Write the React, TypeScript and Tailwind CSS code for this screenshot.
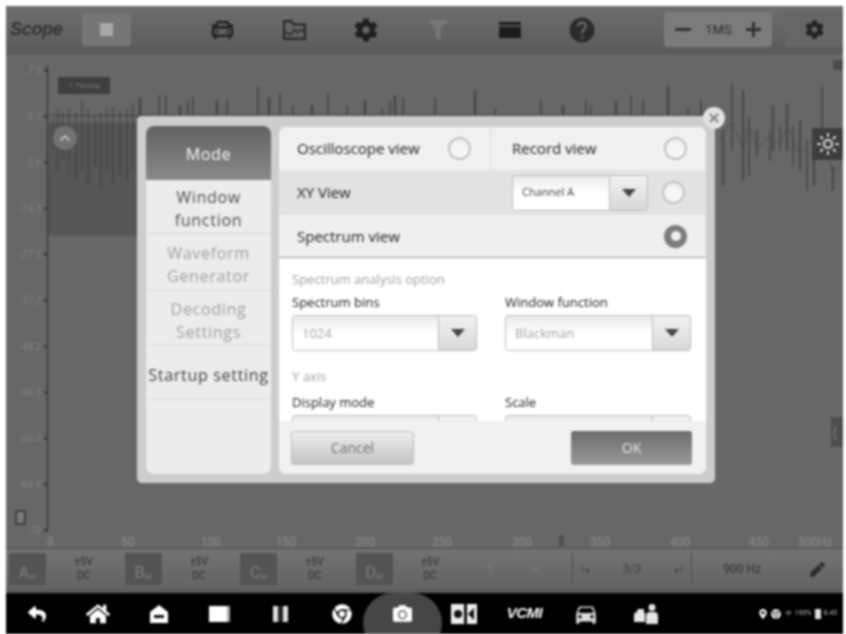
import { CarFront, Sun, X, ChevronUp } from "lucide-react";
import { FaChrome, FaCamera, FaCog, FaFilter, FaHome, FaPen, FaReply, FaMapMarkerAlt, FaWifi } from "react-icons/fa";
import { MdDirectionsCar, MdHelp } from "react-icons/md";

// spikes above the dialog: [x, top of spike]
const topSpikes = [
  [140, 97], [159, 95], [166, 95], [180, 105], [188, 100], [193, 97], [217, 100], [227, 100], [258, 86], [269, 97],
  [280, 93], [293, 105], [312, 105], [328, 92], [347, 105], [365, 100], [382, 108], [390, 100], [395, 95], [403, 97],
  [435, 97], [475, 90], [495, 108], [541, 100], [563, 105], [586, 100], [591, 105], [616, 100], [631, 95], [643, 100],
  [668, 85], [688, 107], [701, 100],
];
// strokes right of the dialog: [x, top, bottom]
const rightSpikes = [
  [723, 130, 185], [732, 83, 150], [743, 90, 180], [749, 115, 175], [757, 130, 155], [770, 130, 160], [773, 105, 150],
  [780, 125, 150], [787, 103, 150], [793, 125, 165], [800, 120, 170], [807, 140, 190], [814, 150, 185], [822, 85, 160], [833, 165, 190],
];
// denser strokes left of the dialog
const leftSpikes = [
  [53, 118, 150], [58, 108, 170], [63, 112, 160], [69, 108, 175], [76, 112, 180], [82, 100, 170], [88, 108, 185], [95, 116, 165],
  [101, 112, 190], [107, 108, 170], [113, 106, 185], [120, 110, 175], [127, 108, 180], [133, 103, 170],
];
const yLabels = ["7.5", "8.7", "2.6", "-14.3", "-27.5", "-37.2", "-44.2", "-56.5", "-60.0", "-64.4", "-70"];
const xLabels: [number, string][] = [
  [50, "0"], [128, "50"], [211, "100"], [286, "150"], [365, "200"], [442, "250"], [522, "300"], [600, "350"], [680, "400"], [759, "450"], [815, "500Hz"],
];

function Chart() {
  return (
    <svg className="absolute inset-0 w-full h-full" viewBox="6 54 837 493">
      <rect x="48" y="122" width="92" height="113" fill="#565656" />
      <line x1="47.5" y1="65" x2="47.5" y2="530" stroke="#3c3c3c" strokeWidth="1.5" />
      <line x1="50" y1="115" x2="720" y2="115" stroke="#4f4f4f" strokeWidth="1.5" />
      {yLabels.map((t, i) => (
        <g key={i}>
          <line x1="44" x2="48" y1={70 + i * 46} y2={70 + i * 46} stroke="#333" strokeWidth="2" />
          <text x="41" y={73 + i * 46} textAnchor="end" fontSize="10" fontStyle="italic" fill="#808080" fontFamily="Roboto, sans-serif">{t}</text>
        </g>
      ))}
      <g className="blur-[0.6px]">
        {leftSpikes.map(([x, a, b], i) => (
          <line key={i} x1={x} x2={x} y1={a} y2={b} stroke="#444" strokeWidth="2.4" opacity="0.55" />
        ))}
        {topSpikes.map(([x, t], i) => (
          <line key={i} x1={x} x2={x} y1={t} y2="116" stroke="#454545" strokeWidth={i % 3 === 0 ? 2.4 : 1.6} />
        ))}
        {rightSpikes.map(([x, a, b], i) => (
          <line key={i} x1={x} x2={x} y1={a} y2={b} stroke="#484848" strokeWidth={i % 2 === 0 ? 2.2 : 1.6} />
        ))}
        <polyline points="718,140 732,120 743,150 749,125 757,148 770,135 780,145 787,125 800,155 807,145 822,130 833,175 843,160" fill="none" stroke="#505050" strokeWidth="1" />
      </g>
      {xLabels.map(([x, t]) => (
        <text key={t} x={x} y="545" textAnchor="middle" fontSize="12" fill="#8c8c8c" fontFamily="Roboto, sans-serif">{t}</text>
      ))}
      <rect x="559" y="535" width="5" height="11" fill="#444" opacity="0.7" />
    </svg>
  );
}

function Radio({ on }: { on?: boolean }) {
  if (on) {
    return (
      <span className="w-[23px] h-[23px] rounded-full bg-[#7d7d7d] flex items-center justify-center">
        <span className="w-[10px] h-[10px] rounded-full bg-[#eee]" />
      </span>
    );
  }
  return <span className="w-[23px] h-[23px] rounded-full border-2 border-[#c4c4c4] bg-[#f6f6f6] shadow-inner" />;
}

function Select({ value, small }: { value: string; small?: boolean }) {
  return (
    <div className="flex h-[36px] rounded-[3px] border border-[#bcbcbc] overflow-hidden">
      <div className={`flex-1 flex items-center pl-[9px] bg-gradient-to-b from-[#e9e9e9] via-white to-white ${small ? "text-[11px] text-[#444]" : "text-[13px] text-[#a8a8a8]"}`}>
        {value}
      </div>
      <div className="w-[38px] flex items-center justify-center border-l border-[#bcbcbc] bg-gradient-to-b from-[#f2f2f2] to-[#d8d8d8]">
        <span className="w-0 h-0 border-x-[7px] border-x-transparent border-t-[8px] border-t-[#444]" />
      </div>
    </div>
  );
}

function Dialog() {
  return (
    <div className="absolute left-[131px] top-[62px] w-[578px] h-[367px] rounded-[5px] bg-[#cdcdcd] flex gap-[8px] p-[9px] font-['Open_Sans',sans-serif]">
      <button className="absolute -right-[10px] -top-[9px] w-[22px] h-[22px] rounded-full bg-[#e2e2e2] flex items-center justify-center">
        <X className="w-[14px] h-[14px] text-[#8a8a8a]" strokeWidth={4} />
      </button>
      <div className="w-[125px] mt-[1px] rounded-lg bg-[#ececec] overflow-hidden flex flex-col text-center text-[16px] leading-[23px] tracking-[0.7px]">
        <div className="h-[54px] shrink-0 pt-[2px] flex items-center justify-center bg-gradient-to-b from-[#626262] to-[#8a8a8a] text-[#f2f2f2]">Mode</div>
        <div className="h-[54px] shrink-0 pt-[5px] flex items-center justify-center border-b border-[#d6d6d6] text-[#555]">Window<br />function</div>
        <div className="h-[57px] shrink-0 pt-[5px] flex items-center justify-center border-b border-[#dcdcdc] text-[#a6a6a6]">Waveform<br />Generator</div>
        <div className="h-[54px] shrink-0 pt-[6px] flex items-center justify-center border-b border-[#dcdcdc] text-[#a6a6a6]">Decoding<br />Settings</div>
        <div className="h-[55px] shrink-0 pt-[7px] flex items-center justify-center border-b border-[#dcdcdc] text-[#4a4a4a] whitespace-nowrap">Startup setting</div>
      </div>
      <div className="flex-1 mt-[2px] rounded-lg overflow-hidden flex flex-col bg-white">
        <div className="h-[43px] shrink-0 flex bg-[#f0f0f0] text-[15px] text-[#2a2a2a]">
          <div className="w-[212px] flex items-center justify-between pl-[18px] pr-[19px] border-r border-[#dedede]">
            <span>Oscilloscope view</span>
            <Radio />
          </div>
          <div className="flex-1 flex items-center justify-between pl-[21px] pr-[19px]">
            <span>Record view</span>
            <Radio />
          </div>
        </div>
        <div className="h-[45px] shrink-0 flex items-center bg-[#e2e2e2] pl-[18px] pr-[21px] text-[15px] text-[#2a2a2a]">
          <span className="flex-1">XY View</span>
          <div className="w-[136px] mr-[14px]"><Select value="Channel A" small /></div>
          <Radio />
        </div>
        <div className="h-[43px] shrink-0 flex items-center justify-between bg-[#efefef] border-b border-[#9e9e9e] pl-[18px] pr-[19px] text-[15px] text-[#2a2a2a]">
          <span>Spectrum view</span>
          <Radio on />
        </div>
        <div className="h-[163px] shrink-0 overflow-hidden px-[13px] pt-[13px] bg-white text-[13px] leading-[16px]">
          <div className="text-[#a6a6a6]">Spectrum analysis option</div>
          <div className="grid grid-cols-[185px_186px] gap-x-[28px] mt-[7px]">
            <div>
              <div className="text-[#2a2a2a] mb-[5px]">Spectrum bins</div>
              <Select value="1024" />
            </div>
            <div>
              <div className="text-[#2a2a2a] mb-[5px]">Window function</div>
              <Select value="Blackman" />
            </div>
          </div>
          <div className="text-[#a6a6a6] mt-[17px]">Y axis</div>
          <div className="grid grid-cols-[185px_186px] gap-x-[28px] mt-[10px]">
            <div>
              <div className="text-[#2a2a2a] mb-[5px]">Display mode</div>
              <Select value="" />
            </div>
            <div>
              <div className="text-[#2a2a2a] mb-[5px]">Scale</div>
              <Select value="" />
            </div>
          </div>
        </div>
        <div className="flex-1 flex items-center justify-between bg-[#f1f1f1] pl-[12px] pr-[14px] text-[14px]">
          <button className="w-[123px] h-[34px] rounded-[3px] border border-[#bdbdbd] bg-gradient-to-b from-[#ededed] to-[#c4c4c4] text-[#777]">Cancel</button>
          <button className="w-[121px] h-[34px] rounded-[3px] bg-gradient-to-b from-[#6d6d6d] to-[#9a9a9a] text-[#e2e2e2]">OK</button>
        </div>
      </div>
    </div>
  );
}

function TopBar() {
  const cell = "w-[72px] flex items-center justify-center";
  return (
    <div className="h-[48px] shrink-0 flex items-center bg-gradient-to-b from-[#6e6e6e] to-[#5b5b5b] border-b border-[#565656]">
      <div className="w-[76px] pl-[4px] font-['Liberation_Sans',sans-serif] italic font-bold text-[18px] tracking-[-0.3px] text-[#353535]">Scope</div>
      <div className="w-[49px] h-[33px] rounded-[4px] bg-[#767676] flex items-center justify-center">
        <span className="w-[13px] h-[13px] bg-[#a8a8a8]" />
      </div>
      <div className="ml-[55px] flex h-full">
        <div className={cell}><CarFront className="w-[25px] h-[25px] text-[#222]" strokeWidth={2.6} /></div>
        <div className={cell}>
          <svg viewBox="0 0 24 24" className="w-[25px] h-[25px]" fill="none" stroke="#2a2a2a" strokeWidth="2.2">
            <path d="M2 21V4h7l2 3h11v14z" />
            <path d="M3 14l5 3 4-5 3 3 3-3 3 2" strokeWidth="1.5" />
          </svg>
        </div>
        <div className={cell}><FaCog className="w-[24px] h-[24px] text-[#1f1f1f]" /></div>
        <div className={cell}><FaFilter className="w-[20px] h-[20px] text-[#777]" /></div>
        <div className={cell}>
          <svg viewBox="0 0 22 16" className="w-[22px] h-[16px]" fill="#1c1c1c">
            <path d="M0 0h22v3H0zM0 4.5h22V16H0z" />
          </svg>
        </div>
        <div className={cell}><MdHelp className="w-[30px] h-[30px] text-[#2b2b2b]" /></div>
      </div>
      <div className="ml-[46px] w-[108px] h-[35px] rounded-[4px] bg-[#7b7b7b] flex items-center justify-between px-[11px] text-[13px] text-[#2f2f2f] font-['Roboto',sans-serif]">
        <span className="w-[16px] h-[3px] bg-[#333]" />
        <span>1MS</span>
        <span className="relative w-[15px] h-[15px]">
          <span className="absolute left-0 top-[6px] w-[15px] h-[3px] bg-[#333]" />
          <span className="absolute left-[6px] top-0 w-[3px] h-[15px] bg-[#333]" />
        </span>
      </div>
      <div className="ml-[13px] w-[58px] h-[35px] rounded-[4px] bg-[#666] flex items-center justify-center">
        <FaCog className="w-[19px] h-[19px] text-[#222]" />
      </div>
    </div>
  );
}

function Channel({ name, sub }: { name: string; sub: string }) {
  return (
    <div className="w-[115.5px] flex items-center">
      <div className="ml-[3px] w-[37px] h-[32px] rounded-[2px] bg-[#545454] flex items-end justify-center pb-[4px] text-[16px] leading-none text-[#7d7d7d]">
        {name}<span className="text-[8px]">{sub}</span>
      </div>
      <div className="w-[75px] text-center text-[10.5px] leading-[14px] text-[#333]">±5V<br />DC</div>
    </div>
  );
}

function ChannelBar() {
  return (
    <div className="h-[45px] shrink-0 flex items-center bg-gradient-to-b from-[#737373] to-[#636363] border-t border-[#4f4f4f] border-b-[4px] border-b-[#5c5c5c] font-['Roboto',sans-serif]">
      <Channel name="A" sub="M" />
      <Channel name="B" sub="M" />
      <Channel name="C" sub="M" />
      <Channel name="D" sub="M" />
      <div className="w-[104px] flex items-center justify-around pr-[14px] text-[12px] text-[#7f7f7f]">
        <span>1</span>
        <span>~</span>
      </div>
      <div className="w-[120px] h-[32px] flex items-center justify-between px-[8px] border-x border-[#505050] text-[10px] text-[#444]">
        <span>I◂</span>
        <span className="text-[12px]">3/3</span>
        <span>▸I</span>
      </div>
      <div className="w-[100px] text-center text-[12px] text-[#333]">900 Hz</div>
      <div className="flex-1 flex justify-center">
        <FaPen className="w-[15px] h-[15px] text-[#2c2c2c]" />
      </div>
    </div>
  );
}

function NavBar() {
  const cell = "w-[61px] h-full flex items-center justify-center text-white";
  return (
    <div className="h-[41px] shrink-0 flex items-center bg-black overflow-hidden">
      <div className={cell}><FaReply className="w-[22px] h-[18px]" /></div>
      <div className={cell}><FaHome className="w-[24px] h-[22px]" /></div>
      <div className={cell}>
        <svg viewBox="0 0 20 20" className="w-[20px] h-[20px]">
          <path d="M10 1L1 8v11h18V8z" fill="#fff" />
          <path d="M5 14v-3h10v3z" fill="#111" />
        </svg>
      </div>
      <div className={cell}>
        <span className="w-[21px] h-[16px] bg-white border-r-[3px] border-r-[#aaa]" />
      </div>
      <div className={cell}>
        <span className="w-[15px] h-[16px] bg-[#ddd] flex justify-center">
          <span className="w-[5px] h-full bg-[#222]" />
        </span>
      </div>
      <div className={cell}><FaChrome className="w-[20px] h-[20px]" /></div>
      <div className="-mx-[9px] w-[79px] h-[60px] self-start rounded-full bg-[#464646] flex items-center justify-center text-white">
        <FaCamera className="w-[21px] h-[19px] -mt-[19px]" />
      </div>
      <div className={cell}>
        <svg viewBox="0 0 26 20" className="w-[26px] h-[20px]">
          <rect width="26" height="20" fill="#eee" />
          <rect x="13" y="0" width="3" height="20" fill="#111" />
          <circle cx="7" cy="10" r="4" fill="#111" />
          <path d="M23 4v12l-6-6z" fill="#111" />
        </svg>
      </div>
      <div className={`${cell} italic font-bold text-[15px] font-['Liberation_Sans',sans-serif] tracking-[-0.5px]`}>VCMI</div>
      <div className={cell}><MdDirectionsCar className="w-[26px] h-[26px] text-[#ddd]" /></div>
      <div className={cell}>
        <svg viewBox="0 0 26 20" className="w-[26px] h-[20px]" fill="#e6e6e6">
          <circle cx="18" cy="3.5" r="3.5" />
          <path d="M12 20v-8a4 4 0 014-4h4a4 4 0 014 4v8z" />
          <path d="M2 9l2-4h6v4h1v9H0V9z" />
        </svg>
      </div>
      <div className="ml-auto pr-[6px] flex items-center gap-[3px] text-[7px] text-[#bbb] font-['Roboto',sans-serif]">
        <FaMapMarkerAlt className="w-[8px] h-[10px] text-white mr-[1px]" />
        <FaChrome className="w-[10px] h-[10px] text-white mr-[1px]" />
        <FaWifi className="w-[7px] h-[7px] text-[#888]" />
        <span>100%</span>
        <span className="w-[6px] h-[10px] bg-[#ddd]" />
        <span>8:45</span>
      </div>
    </div>
  );
}

export default function App() {
  return (
    <div className="w-[846px] h-[634px] bg-white pt-[6px] pl-[6px] pr-[3px] overflow-hidden">
      <div className="w-full h-full flex flex-col blur-[0.8px]">
        <TopBar />
        <div className="relative flex-1 bg-[#676767]">
          <Chart />
          <div className="absolute left-[52px] top-[23px] w-[52px] h-[17px] bg-[#3f3f3f] flex items-center justify-center text-[8px] text-[#777] font-['Roboto',sans-serif]">1 Tkmsg</div>
          <div className="absolute left-[47px] top-[72px] w-[24px] h-[24px] rounded-full bg-[#727272] flex items-center justify-center">
            <ChevronUp className="w-[16px] h-[16px] text-[#bbb]" strokeWidth={3} />
          </div>
          <div className="absolute right-0 top-[6px] w-[10px] h-[10px] rounded-l-[3px] bg-[#4b4b4b]" />
          <div className="absolute right-0 top-[74px] w-[31px] h-[32px] bg-[#3d3d3d] flex items-center justify-center">
            <Sun className="w-[24px] h-[24px] text-[#e2e2e2]" />
          </div>
          <div className="absolute right-0 top-[363px] w-[12px] h-[30px] bg-[#4e4e4e] text-[14px] text-[#7a7a7a] pl-[2px] leading-[30px]">(</div>
          <div className="absolute left-[9px] top-[456px] w-[11px] h-[15px] bg-[#7a7a7a] border-2 border-[#3f3f3f]" />
          <Dialog />
        </div>
        <ChannelBar />
        <NavBar />
      </div>
    </div>
  );
}
